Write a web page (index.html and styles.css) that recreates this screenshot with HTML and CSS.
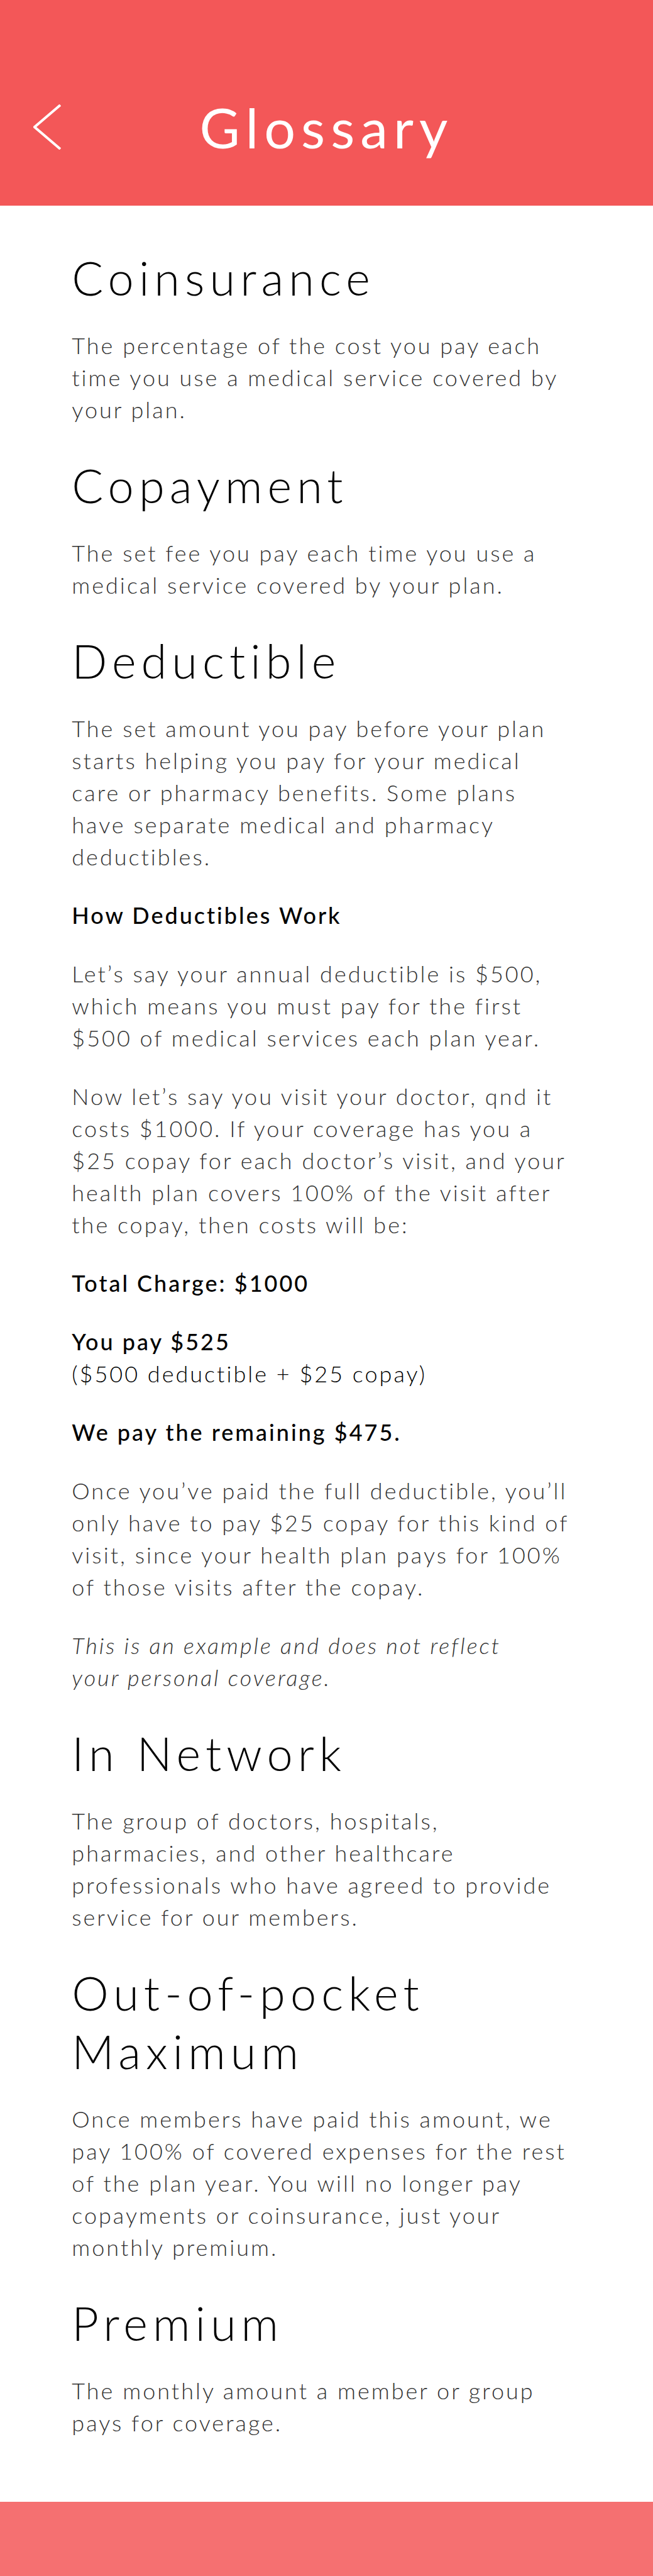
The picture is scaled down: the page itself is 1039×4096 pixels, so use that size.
FILE: index.html
```html
<!DOCTYPE html>
<html lang="en">
<head>
<meta charset="utf-8">
<meta name="viewport" content="width=device-width, initial-scale=1">
<title>Glossary</title>
<link rel="stylesheet" href="styles.css">
</head>
<body>
<header class="topbar">
  <a class="back" href="#" aria-label="Back">
    <svg class="back-icon" viewBox="0 0 44 72" aria-hidden="true"><path d="M43 1 L2 36 L43 71"/></svg>
  </a>
  <h1 class="title">Glossary</h1>
</header>
<main class="glossary">
  <section class="entry">
    <h2 class="term">Coinsurance</h2>
    <p>The percentage of the cost you pay each<br>time you use a medical service covered by<br>your plan.</p>
  </section>
  <section class="entry">
    <h2 class="term">Copayment</h2>
    <p>The set fee you pay each time you use a<br>medical service covered by your plan.</p>
  </section>
  <section class="entry">
    <h2 class="term">Deductible</h2>
    <p>The set amount you pay before your plan<br>starts helping you pay for your medical<br>care or pharmacy benefits. Some plans<br>have separate medical and pharmacy<br>deductibles.</p>
    <h3 class="strong">How Deductibles Work</h3>
    <p>Let’s say your annual deductible is $500,<br>which means you must pay for the first<br>$500 of medical services each plan year.</p>
    <p>Now let’s say you visit your doctor, qnd it<br>costs $1000. If your coverage has you a<br>$25 copay for each doctor’s visit, and your<br>health plan covers 100% of the visit after<br>the copay, then costs will be:</p>
    <p class="strong">Total Charge: $1000</p>
    <p><strong class="strong">You pay $525</strong><br><span class="detail">($500 deductible + $25 copay)</span></p>
    <p class="strong">We pay the remaining $475.</p>
    <p>Once you’ve paid the full deductible, you’ll<br>only have to pay $25 copay for this kind of<br>visit, since your health plan pays for 100%<br>of those visits after the copay.</p>
    <p><em>This is an example and does not reflect<br>your personal coverage.</em></p>
  </section>
  <section class="entry">
    <h2 class="term">In Network</h2>
    <p>The group of doctors, hospitals,<br>pharmacies, and other healthcare<br>professionals who have agreed to provide<br>service for our members.</p>
  </section>
  <section class="entry">
    <h2 class="term">Out-of-pocket<br>Maximum</h2>
    <p>Once members have paid this amount, we<br>pay 100% of covered expenses for the rest<br>of the plan year. You will no longer pay<br>copayments or coinsurance, just your<br>monthly premium.</p>
  </section>
  <section class="entry">
    <h2 class="term">Premium</h2>
    <p>The monthly amount a member or group<br>pays for coverage.</p>
  </section>
</main>
<footer class="bottombar"></footer>
</body>
</html>
```
FILE: styles.css
```css
* {
  box-sizing: border-box;
}

body {
  margin: 0;
  min-height: 100vh;
  display: flex;
  flex-direction: column;
  background: #fff;
  color: #333;
  font-family: Lato, "Open Sans", sans-serif;
  font-size: 36px;
  font-weight: 300;
  line-height: 51px;
  letter-spacing: 3px;
}

.topbar {
  display: grid;
  grid-template-columns: 1fr auto 1fr;
  align-items: center;
  padding: 152px 53px 75px;
  background: #f35758;
  color: #fff;
}

.back {
  display: flex;
  color: inherit;
}

.back-icon {
  width: 44px;
  height: 72px;
  fill: none;
  stroke: currentColor;
  stroke-width: 4;
}

.title {
  margin: 0;
  font-size: 88px;
  font-weight: 400;
  line-height: 100px;
  letter-spacing: 9px;
}

.glossary {
  display: flex;
  flex-direction: column;
  gap: 48px;
  padding: 68px 8% 100px 11%;
}

.entry > * {
  margin: 42px 0 0;
}

.entry > .term {
  margin: 0;
  color: #000;
  font-size: 74px;
  font-weight: 300;
  line-height: 93px;
  letter-spacing: 8px;
}

.entry > .term + p {
  margin-top: 36px;
}

.entry .strong {
  color: #000;
  font-size: 36px;
  font-weight: 500;
}

.detail {
  color: #000;
}

.bottombar {
  flex: 1;
  min-height: 117px;
  background: #f57071;
}
```
